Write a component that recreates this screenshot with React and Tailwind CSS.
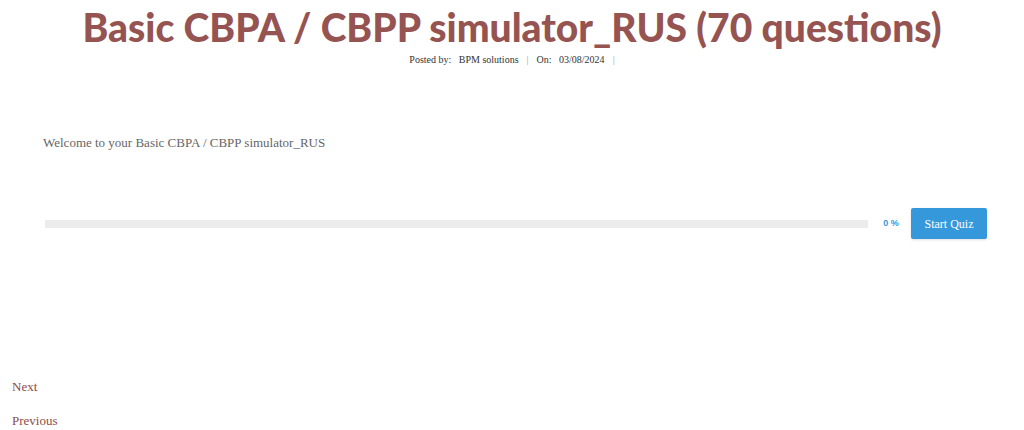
import React from 'react';

export default function App() {
    return (
        <div className="w-[1024px] h-[430px] bg-white overflow-hidden font-['Liberation_Serif',serif]">
            {/* Header */}
            <header className="text-center pt-[1px]">
                <h1 className="whitespace-nowrap font-['Lato',sans-serif] font-black text-[39px] leading-[53px] text-[#955451] tracking-[0px]">
                    Basic CBPA / CBPP simulator_RUS (70 questions)
                </h1>
                <div className="flex justify-center items-center gap-[8px] text-[10px] leading-[12px] text-[#333]">
                    <span>Posted by:&nbsp;&nbsp; BPM solutions</span>
                    <span className="text-[#999]">|</span>
                    <span>On:&nbsp;&nbsp; 03/08/2024</span>
                    <span className="text-[#999]">|</span>
                </div>
            </header>

            {/* Quiz intro */}
            <section className="pl-[43px] pr-[37px] mt-[69px]">
                <p className="text-[13px] leading-[16px] text-[#666]">Welcome to your Basic CBPA / CBPP simulator_RUS</p>
                <div className="flex items-center mt-[57px]">
                    <div className="flex-1 ml-[2px] h-[8px] bg-[#ececec]" />
                    <span className="w-[43px] pl-[3px] text-center text-[9px] font-bold text-[#3498db] font-['Liberation_Sans',sans-serif]">0 %</span>
                    <button className="w-[76px] h-[31px] bg-[#3498db] text-white text-[12px] rounded-[2px] shadow-sm">Start Quiz</button>
                </div>
            </section>

            {/* Nav */}
            <nav className="pl-[12px] mt-[140px] text-[13px] text-[#8d4b45] space-y-[18px]">
                <div className="leading-[16px]">Next</div>
                <div className="leading-[16px]">Previous</div>
            </nav>
        </div>
    );
}
